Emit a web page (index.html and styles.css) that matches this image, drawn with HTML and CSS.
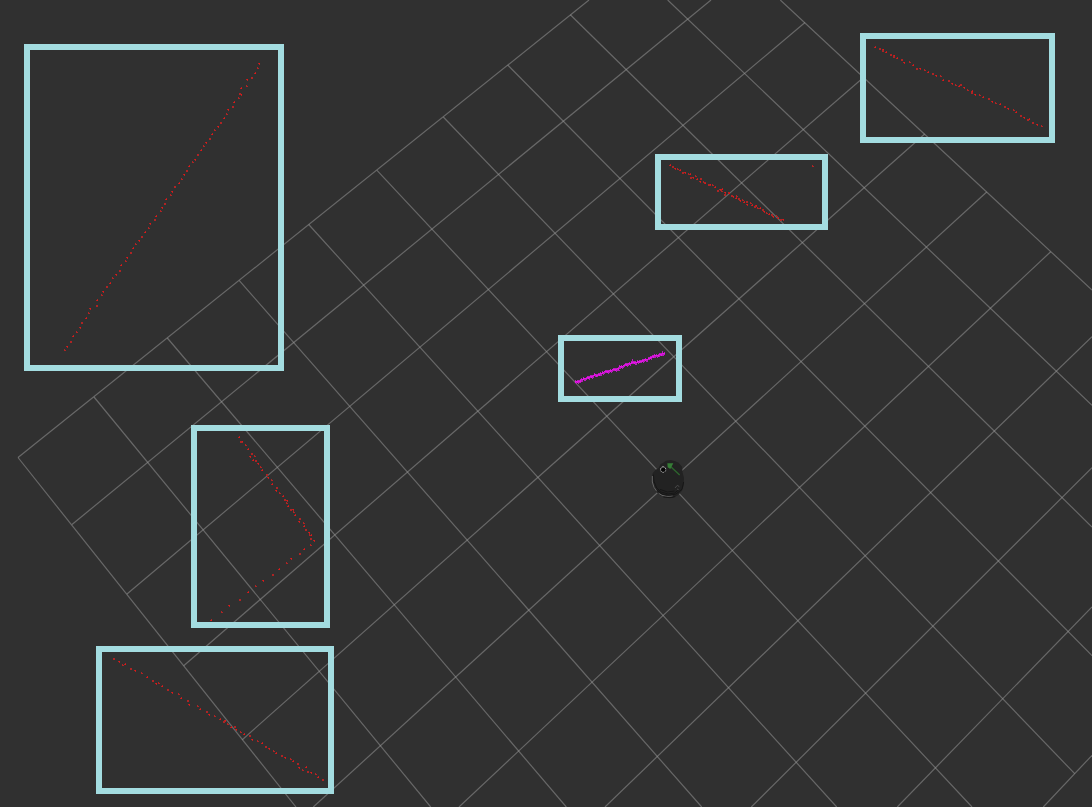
FILE: index.html
```
<!DOCTYPE html>
<html lang="en">
<head>
<meta charset="utf-8">
<meta name="viewport" content="width=device-width, initial-scale=1">
<title>Laser scan map</title>
<link rel="stylesheet" href="styles.css">
</head>
<body>
<main class="viewport">
<svg class="scene" viewBox="0 0 1092 807" preserveAspectRatio="xMidYMid slice" role="img" aria-label="Laser scan map">
  <!-- ground grid, lines rising to the right -->
  <g class="grid">
    <path d="M18 457.5L589 0"/>
    <path d="M72 524.5L711 0"/>
    <path d="M127 594L805 22.5"/>
    <path d="M183.700 665.7L864 77"/>
    <path d="M242.300 739.700L924.700 134"/>
    <path d="M313.300 807L986.700 192"/>
    <path d="M459 807L1050.700 251.700"/>
    <path d="M605 807L1092 336.700"/>
    <path d="M751.300 807L1092 467.700"/>
    <path d="M897.300 807L1092 607"/>
    <path d="M1043.300 807L1092 755.300"/>
  </g>
  <!-- ground grid, lines falling to the right -->
  <g class="grid">
    <path d="M18 457.5L296 807"/>
    <path d="M94 397L430.700 807"/>
    <path d="M167.300 338L566.300 807"/>
    <path d="M239.300 280.700L701.700 807"/>
    <path d="M308.700 224.500L836.700 807"/>
    <path d="M377 170.300L972 807"/>
    <path d="M443.300 117L1074.700 773.700"/>
    <path d="M507.700 65L1092 655.700"/>
    <path d="M570.300 14.700L1092 527"/>
    <path d="M667.700 0L1092 405.300"/>
    <path d="M780.300 0L1092 290"/>
  </g>
  <g id="scan"></g>
  <!-- robot base, drawn at three units per pixel -->
  <g transform="translate(640 450) scale(.333333)">
    <path class="robot-body" d="M62 42L70 38L78 32L92 30L106 34L116 38L126 50L128 68L132 84L131 106L126 122L114 136L98 143L80 142L62 137L48 125L39 108L36 88L38 70L46 60L56 54Z"/>
    <path class="robot-rim" d="M37 78L37 96L42 112L50 124M56 130L66 136L80 139L98 138"/>
    <path class="robot-edge" d="M40 74L42 94L50 114L64 126L84 132L104 129L118 118M51 121L68 133L88 136L108 132L126 118L131 96M60 118L82 126L104 123M70 141L90 143L106 140"/>
    <path class="robot-mark" d="M105 114L112 106L118 110M111 117L116 119"/>
    <path class="lidar-ring" d="M69 50L76 53L78 60L74 66L66 67L61 61L63 53Z"/>
    <circle class="lidar" cx="70" cy="59" r="6"/>
    <path class="heading-shaft" d="M91 49L119 75"/>
    <path class="heading-head" d="M82 40L100 40L96 47L91 57L83 52Z"/>
  </g>
  <g class="region">
    <rect x="27" y="47" width="254" height="321"/>
    <rect x="658" y="157" width="167" height="70"/>
    <rect x="863" y="36" width="189" height="104"/>
    <rect x="561" y="338" width="118" height="61"/>
    <rect x="194" y="428" width="133" height="197"/>
    <rect x="99" y="649" width="232" height="142"/>
  </g>
</svg>
</main>
<script src="scan.js"></script>
</body>
</html>
```
FILE: styles.css
```
body {
  margin: 0;
  background: #303030;
}

.viewport {
  height: 100vh;
  overflow: hidden;
}

.scene {
  display: block;
  width: 100%;
  height: 100%;
}

.grid {
  fill: none;
  stroke: #a0a0a0;
  stroke-opacity: .5;
  stroke-width: 1.2;
}

.region {
  fill: none;
  stroke: #a3dce0;
  stroke-width: 6;
}

.hit-soft {
  fill: #ad2424;
  shape-rendering: crispEdges;
}

.hit-core {
  fill: #e81313;
  shape-rendering: crispEdges;
}

.wall-soft {
  fill: #b81cbc;
  shape-rendering: crispEdges;
}

.wall-core {
  fill: #e512e8;
  shape-rendering: crispEdges;
}

.robot-body {
  fill: #222;
}

.robot-rim {
  fill: none;
  stroke: #666;
  stroke-width: 3;
}

.robot-edge {
  fill: none;
  stroke: #161616;
  stroke-width: 3;
}

.robot-mark {
  fill: none;
  stroke: #4a4a4a;
  stroke-width: 3;
}

.lidar-ring {
  fill: none;
  stroke: #b0b0b0;
  stroke-width: 3;
  stroke-dasharray: 5 3;
}

.lidar {
  fill: #050505;
}

.heading-shaft {
  fill: none;
  stroke: #2d662d;
  stroke-width: 4;
}

.heading-head {
  fill: #367d36;
}
```
FILE: scan.js
```
// Laser returns. Each group has an origin in pixels; samples are in thirds of a pixel.
const hits = [
  { origin: [0, 0], points: "778,191 771,206 765,219 753,231 741,239 738,258 725,266 718,280 723,283 714,294 702,306 696,318 684,327 678,342 672,355 661,366 654,380 643,390 636,404 627,414 619,427 609,438 603,452 593,464 587,477 576,487 568,499 559,512 552,524 543,537 537,551 522,558 518,573 510,586 498,597 492,609 486,621 480,635 470,648 462,659 451,671 444,684 436,697 424,708 417,720 405,733 401,746 390,758 381,771 375,785 365,797 359,810 348,822 336,834 330,849 320,860 310,874 303,887 292,900 288,915 271,926 264,941 258,954 244,966 242,982 229,996 221,1010 210,1023 201,1038 193,1052" },
  { origin: [650, 150], points: "60,45 67,49 75,55 83,59 91,60 98,67 106,66 114,72 121,74 122,82 130,83 135,78 143,88 151,86 152,93 159,97 167,99 174,103 181,104 188,107 195,111 202,120 210,117 214,124 218,119 222,132 227,126 234,129 238,131 243,137 250,139 259,138 258,144 264,146 270,150 277,152 283,156 290,153 293,162 300,161 306,166 313,169 318,167 323,176 330,174 337,179 344,184 350,189 357,193 364,193 371,200 378,200 384,205 391,208 400,207 486,48" },
  { origin: [728, 0], points: "441,141 454,144 465,148 463,153 475,158 487,162 499,165 497,171 508,174 520,179 530,186 544,187 555,195 564,204 578,205 588,211 601,216 613,219 625,225 637,229 647,240 660,242 672,249 682,255 694,260 697,254 708,262 717,270 732,273 729,278 741,282 754,287 765,293 780,296 792,303 802,310 816,313 828,319 841,326 855,330 866,338 876,346 888,352 899,361 904,357 914,366 927,372 939,379" },
  { origin: [0, 403], points: "718,104 720,115 728,116 735,127 746,139 753,150 750,160 762,161 759,171 766,171 774,182 782,192 787,203 798,213 806,223 813,233 818,243 829,253 829,263 838,272 850,281 854,290 861,291 860,300 865,309 870,318 879,318 880,327 886,336 897,345 898,354 909,362 913,371 917,380 927,388 928,397 934,396 932,405 944,412 931,426 913,438 897,452 875,467 859,481 837,498 816,513 789,531 765,549 745,567 717,588 688,608 663,629 633,651" },
  { origin: [0, 403], points: "341,765 357,775 367,787 376,784 391,795 407,803 424,812 441,822 456,831 468,842 474,840 486,849 501,858 516,867 534,874 543,885 561,892 569,903 591,909 600,918 619,924 629,933 644,940 660,948 670,955 677,953 682,965 693,972 702,969 709,979 720,987 733,994 748,998 757,1008 771,1015 787,1020 795,1030 809,1036 819,1044 830,1050 844,1056 857,1062 870,1068 880,1075 892,1081 898,1092 908,1101 918,1092 921,1104 934,1109 946,1115 955,1123 968,1128" }
];

const wall = { origin: [550, 330], points: "76,153 84,155 92,152 99,145 106,145 115,143 122,139 128,138 134,134 142,135 150,129 158,128 164,125 172,124 180,120 188,119 196,117 204,115 209,109 214,109 220,106 230,104 238,101 247,97 256,97 262,94 270,93 278,91 286,89 292,87 300,82 308,78 314,76 322,76 330,72 338,70 345,71" };

const layer = document.getElementById("scan");

function draw(className, d) {
  const path = document.createElementNS("http://www.w3.org/2000/svg", "path");
  path.setAttribute("class", className);
  path.setAttribute("d", d);
  layer.append(path);
}

function pixels(group) {
  return group.points.split(" ").map((pair) => {
    const [x, y] = pair.split(",").map(Number);
    return [Math.floor(group.origin[0] + x / 3), Math.floor(group.origin[1] + y / 3)];
  });
}

const cell = (x, y, w = 1, h = 1) => `M${x} ${y}h${w}v${h}h${-w}z`;

let soft = "";
let core = "";
hits.flatMap(pixels).forEach(([x, y], i) => {
  const shape = i % 4;
  if (shape === 0) {
    soft += cell(x - 1, y, 2, 1) + cell(x, y + 1);
    core += cell(x, y);
  } else if (shape === 1) {
    soft += cell(x, y, 2, 1) + cell(x, y - 1);
  } else if (shape === 2) {
    soft += cell(x - 1, y, 2, 1) + cell(x, y - 1);
    core += cell(x, y);
  } else {
    soft += cell(x, y, 2, 2);
  }
});
draw("hit-soft", soft);
draw("hit-core", core);

let wallSoft = "";
let wallCore = "";
const line = pixels(wall);
for (let i = 1; i < line.length; i += 1) {
  const [x0, y0] = line[i - 1];
  const [x1, y1] = line[i];
  for (let x = x0; x < x1; x += 1) {
    const y = Math.round(y0 + (y1 - y0) * (x - x0) / (x1 - x0));
    const noise = (x * 37 + i * 11) % 7;
    wallSoft += cell(x, y - (noise > 1 ? 1 : 0), 1, noise === 5 ? 4 : 3);
    wallCore += cell(x, y, 1, noise === 3 || noise === 6 ? 2 : 1);
  }
}
wallSoft += cell(578, 380, 1, 4) + cell(580, 379, 1, 4) + cell(632, 359, 1, 4) + cell(662, 351, 1, 5) + cell(617, 370, 3, 1);
draw("wall-soft", wallSoft);
draw("wall-core", wallCore);
```
